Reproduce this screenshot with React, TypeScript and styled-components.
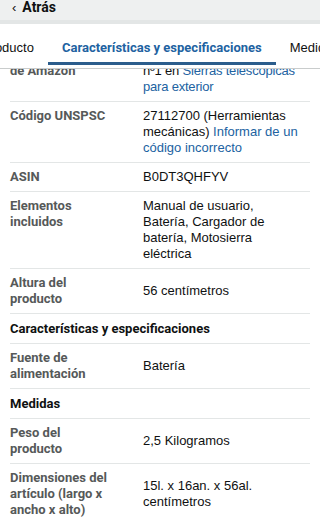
import React, { useLayoutEffect, useRef } from 'react';
import styled, { createGlobalStyle } from 'styled-components';

const GlobalStyle = createGlobalStyle`
  html, body {
    margin: 0;
    padding: 0;
    background: #ffffff;
  }
  body {
    font-family: "Liberation Sans", Arial, sans-serif;
    color: #0f1111;
    -webkit-font-smoothing: antialiased;
  }
`;

const boldFont = `Roboto, "Liberation Sans", Arial, sans-serif`;

const Screen = styled.div`
  width: 320px;
  height: 520px;
  display: flex;
  flex-direction: column;
  overflow: hidden;
`;

const TopBar = styled.div`
  flex: none;
  height: 14px;
  display: flex;
  align-items: center;
  gap: 6px;
  padding: 0 12px 6px;
  background: #eef0f0;
  border-bottom: 4px solid #e3e6e6;
`;

const BackChevron = styled.span`
  font-size: 13px;
  color: #0f1111;
  line-height: 1;
`;

const BackLabel = styled.span`
  font-family: ${boldFont};
  font-size: 14px;
  font-weight: 700;
  color: #0f1111;
`;

const TabStrip = styled.div`
  flex: none;
  height: 44px;
  display: flex;
  align-items: stretch;
  white-space: nowrap;
  overflow-x: auto;
  scrollbar-width: none;
  background: #ffffff;
  border-bottom: 1px solid #c9cccc;
  &::-webkit-scrollbar {
    display: none;
  }
`;

const Tab = styled.div<{ $active?: boolean }>`
  flex: none;
  display: flex;
  align-items: center;
  padding: 8px 14px 0;
  font-family: ${p => (p.$active ? boldFont : 'inherit')};
  font-size: 13px;
  font-weight: ${p => (p.$active ? 700 : 400)};
  color: ${p => (p.$active ? '#2162a1' : '#0f1111')};
  border-bottom: 3px solid ${p => (p.$active ? '#2b5d8c' : 'transparent')};
  margin-bottom: 3px;
`;

const Content = styled.div`
  flex: 1;
  overflow: hidden;
  padding: 0 10px;
`;

const Row = styled.div`
  display: grid;
  grid-template-columns: 133px 1fr;
  padding: 6px 0;
  border-bottom: 1px solid #e3e6e6;
  font-size: 13px;
  line-height: 16px;
`;

const Label = styled.div`
  align-self: start;
  padding-right: 28px;
  font-family: ${boldFont};
  font-weight: 700;
  color: #565959;
`;

const Value = styled.div<{ $tight?: boolean }>`
  align-self: center;
  padding-right: 10px;
  color: #0f1111;
  letter-spacing: ${p => (p.$tight ? '-0.2px' : 'normal')};
`;

const Link = styled.span`
  color: #2162a1;
`;

const SectionTitle = styled.div`
  padding: 6px 0;
  border-bottom: 1px solid #e3e6e6;
  font-family: ${boldFont};
  font-size: 13px;
  line-height: 17px;
  font-weight: 700;
  color: #0f1111;
`;

type Spec = { label: string; value: React.ReactNode; tight?: boolean };

const general: Spec[] = [
  {
    label: 'Clasificación en los más vendidos de Amazon',
    tight: true,
    value: (
      <>
        nº7.529 en Bricolaje y herramientas
        <br />
        nº1 en <Link>Sierras telescópicas para exterior</Link>
      </>
    ),
  },
  {
    label: 'Código UNSPSC',
    value: (
      <>
        27112700 (Herramientas mecánicas) <Link>Informar de un código incorrecto</Link>
      </>
    ),
  },
  { label: 'ASIN', value: 'B0DT3QHFYV' },
  { label: 'Elementos incluidos', value: 'Manual de usuario, Batería, Cargador de batería, Motosierra eléctrica' },
  { label: 'Altura del producto', value: '56 centímetros' },
];

const features: Spec[] = [{ label: 'Fuente de alimentación', value: 'Batería' }];

const measures: Spec[] = [
  { label: 'Peso del producto', value: '2,5 Kilogramos' },
  { label: 'Dimensiones del artículo (largo x ancho x alto)', value: '15l. x 16an. x 56al. centímetros' },
];

const SpecRows: React.FC<{ items: Spec[]; firstRef?: React.Ref<HTMLDivElement> }> = ({ items, firstRef }) => (
  <>
    {items.map((s, i) => (
      <Row key={s.label} ref={i === 0 ? firstRef : undefined}>
        <Label>{s.label}</Label>
        <Value $tight={s.tight}>{s.value}</Value>
      </Row>
    ))}
  </>
);

const App: React.FC = () => {
  const stripRef = useRef<HTMLDivElement>(null);
  const activeRef = useRef<HTMLDivElement>(null);
  const contentRef = useRef<HTMLDivElement>(null);
  const rankRef = useRef<HTMLDivElement>(null);

  // restore the scroll positions the screen was captured at
  useLayoutEffect(() => {
    if (stripRef.current && activeRef.current) {
      stripRef.current.scrollLeft = activeRef.current.offsetLeft - stripRef.current.offsetLeft - 48;
    }
    if (contentRef.current && rankRef.current) {
      const c = contentRef.current;
      const r = rankRef.current;
      const rowBottom = r.offsetTop - c.offsetTop + r.offsetHeight;
      c.scrollTop = rowBottom - (102 - c.offsetTop);
    }
  }, []);

  return (
    <>
      <GlobalStyle />
      <Screen>
        <TopBar>
          <BackChevron>‹</BackChevron>
          <BackLabel>Atrás</BackLabel>
        </TopBar>
        <TabStrip ref={stripRef}>
          <Tab>Acerca de este producto</Tab>
          <Tab ref={activeRef} $active>
            Características y especificaciones
          </Tab>
          <Tab>Medidas</Tab>
          <Tab>Opiniones</Tab>
        </TabStrip>
        <Content ref={contentRef}>
          <SpecRows items={general} firstRef={rankRef} />
          <SectionTitle>Características y especificaciones</SectionTitle>
          <SpecRows items={features} />
          <SectionTitle>Medidas</SectionTitle>
          <SpecRows items={measures} />
        </Content>
      </Screen>
    </>
  );
};

export default App;
